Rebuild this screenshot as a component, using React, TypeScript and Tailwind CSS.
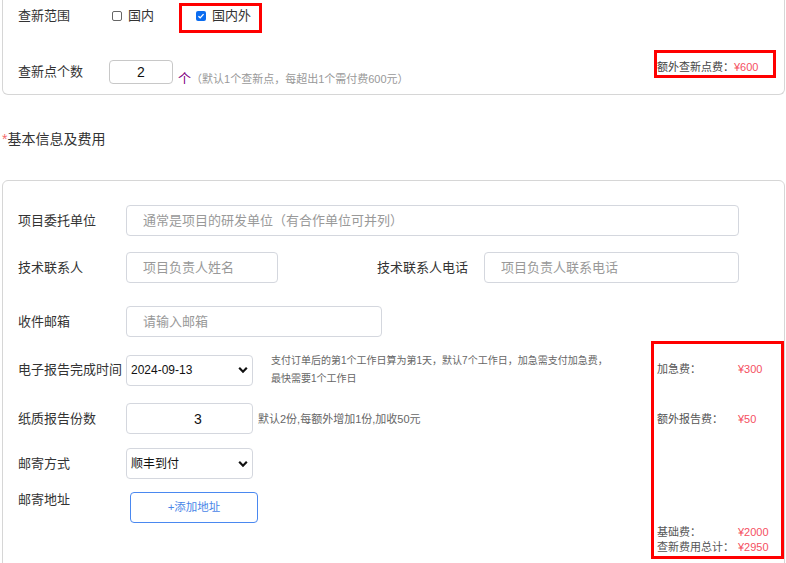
import React from "react";

function Box({ checked, label }: { checked?: boolean; label: string }) {
  return (
    <label className="flex items-center">
      {checked ? (
        <span className="w-[10px] h-[10px] rounded-[2px] bg-[#0b6cf0] flex items-center justify-center">
          <svg viewBox="0 0 10 10" className="w-[8px] h-[8px]">
            <path d="M1.8 5.2 L4 7.3 L8.2 2.6" fill="none" stroke="white" strokeWidth="1.7" />
          </svg>
        </span>
      ) : (
        <span className="w-[10px] h-[10px] rounded-[2px] border border-[#666] bg-white" />
      )}
      <span className="ml-[6px] text-[13px] leading-[20px] text-[#333]">{label}</span>
    </label>
  );
}

function Chevron() {
  return (
    <svg viewBox="0 0 10 7" className="absolute right-[5px] top-1/2 -translate-y-1/2 w-[10px] h-[7px] pointer-events-none">
      <path d="M1.2 1.3 L5 5.2 L8.8 1.3" fill="none" stroke="#111" strokeWidth="2.2" />
    </svg>
  );
}

function Label({ children }: { children: React.ReactNode }) {
  return (
    <span className="w-[108px] shrink-0 whitespace-nowrap text-[13px] leading-[20px] text-[#333]">
      {children}
    </span>
  );
}

const field =
  "h-[31px] border border-[#d4d7de] rounded-[4px] bg-white px-[16px] text-[13px] text-[#333] placeholder:text-[#999] outline-none";

function FeeRow({ label, value, tall }: { label: string; value: string; tall?: boolean }) {
  return (
    <div className={`flex text-[11px] ${tall ? "leading-[16px]" : "leading-[15px]"}`}>
      <span className="w-[81px] shrink-0 text-[#555] whitespace-nowrap">{label}</span>
      <span className="text-[#f5505f]">{value}</span>
    </div>
  );
}

export default function App() {
  return (
    <div className="w-[786px] h-[563px] overflow-hidden bg-white pl-[2px] pr-[1px] font-['Liberation_Sans','Noto_Sans_CJK_SC',sans-serif]">
      {/* 查新范围 card, top edge scrolled out of view */}
      <div className="border-x border-b border-[#d6d6d6] rounded-b-md pl-[15px] pr-[8px] pb-[10px]">
        <div className="flex items-center h-[32px]">
          <span className="w-[94px] shrink-0 text-[13px] leading-[20px] text-[#333]">查新范围</span>
          <Box label="国内" />
          <div className="self-start mt-[3px] ml-[25px] h-[30px] w-[83px] border-[3px] border-[#ff0000] flex items-center pl-[14px] pb-[4px]">
            <Box checked label="国内外" />
          </div>
        </div>

        <div className="flex items-end mt-[28px] h-[24px]">
          <div className="flex items-center h-[24px]">
            <span className="w-[91px] shrink-0 text-[13px] leading-[20px] text-[#333]">查新点个数</span>
            <input
              defaultValue="2"
              className="w-[64px] h-[24px] border border-[#c8c8c8] rounded-[4px] text-center text-[14px] text-[#111] outline-none"
            />
          </div>
          <span className="ml-[5px] text-[13px] leading-[16px] text-[#800080] -mb-[3px]">个</span>
          <span className="text-[11px] leading-[16px] text-[#999] -mb-[3px] whitespace-nowrap">
            （默认1个查新点，每超出1个需付费600元）
          </span>
          <div className="ml-auto -mt-[10px] mb-[6px] w-[122px] h-[28px] shrink-0 border-[3px] border-[#ff0000] flex items-end text-[11px] leading-[15px] whitespace-nowrap">
            <span className="text-[#444]">额外查新点费：</span>
            <span className="text-[#f5505f]">¥600</span>
          </div>
        </div>
      </div>

      <div className="mt-[34px] text-[14px] leading-[20px] text-[#333]">
        <span className="text-[#f56c6c]">*</span>基本信息及费用
      </div>

      {/* 基本信息 card */}
      <div className="mt-[31px] border border-[#d6d6d6] rounded-md pt-[24px] pl-[15px] pb-[40px]">
        <div className="flex items-center">
          <Label>项目委托单位</Label>
          <input className={`${field} w-[613px]`} placeholder="通常是项目的研发单位（有合作单位可并列）" />
        </div>

        <div className="flex items-center mt-[16px]">
          <Label>技术联系人</Label>
          <input className={`${field} w-[152px]`} placeholder="项目负责人姓名" />
          <span className="ml-[99px] w-[107px] shrink-0 whitespace-nowrap text-[13px] leading-[20px] text-[#333]">
            技术联系人电话
          </span>
          <input className={`${field} w-[255px]`} placeholder="项目负责人联系电话" />
        </div>

        <div className="flex items-center mt-[23px]">
          <Label>收件邮箱</Label>
          <input className={`${field} w-[256px]`} placeholder="请输入邮箱" />
        </div>

        <div className="flex items-start">
          <div className="flex-1">
            <div className="flex items-center mt-[15px]">
              <Label>电子报告完成时间</Label>
              <div className="relative w-[127px] shrink-0">
                <select className="appearance-none w-full h-[31px] border border-[#d4d7de] rounded-[4px] bg-white pl-[4px] text-[12px] text-[#111] outline-none">
                  <option>2024-09-13</option>
                </select>
                <Chevron />
              </div>
              <p className="ml-[18px] text-[10px] leading-[18px] text-[#666] whitespace-nowrap">
                支付订单后的第1个工作日算为第1天，默认7个工作日，加急需支付加急费，
                <br />
                最快需要1个工作日
              </p>
            </div>

            <div className="flex items-center mt-[15px]">
              <Label>纸质报告份数</Label>
              <input
                defaultValue="3"
                className="w-[127px] h-[31px] border border-[#d4d7de] rounded-[4px] pl-[17px] text-center text-[14px] text-[#111] outline-none"
              />
              <span className="ml-[5px] text-[11px] leading-[16px] text-[#666] whitespace-nowrap">
                默认2份,每额外增加1份,加收50元
              </span>
            </div>

            <div className="flex items-center mt-[14px]">
              <Label>邮寄方式</Label>
              <div className="relative w-[127px] shrink-0">
                <select className="appearance-none w-full h-[31px] border border-[#d4d7de] rounded-[4px] bg-white pl-[4px] text-[12px] text-[#111] outline-none">
                  <option>顺丰到付</option>
                </select>
                <Chevron />
              </div>
            </div>

            <div className="flex items-start mt-[11px]">
              <Label>邮寄地址</Label>
              <button className="ml-[4px] mt-[2px] w-[128px] h-[31px] border border-[#4a88f0] rounded-[4px] bg-white text-[11.5px] text-[#4a86e8]">
                +添加地址
              </button>
            </div>
          </div>

          {/* fee column */}
          <div className="mt-[4px] w-[133px] h-[218px] shrink-0 border-[3px] border-[#ff0000] flex flex-col pl-[3px] pt-[17px] pb-[1px]">
            <FeeRow tall label="加急费：" value="¥300" />
            <div className="mt-[34px]">
              <FeeRow tall label="额外报告费：" value="¥50" />
            </div>
            <div className="mt-auto">
              <FeeRow label="基础费：" value="¥2000" />
              <FeeRow label="查新费用总计：" value="¥2950" />
            </div>
          </div>
        </div>
      </div>
    </div>
  );
}
